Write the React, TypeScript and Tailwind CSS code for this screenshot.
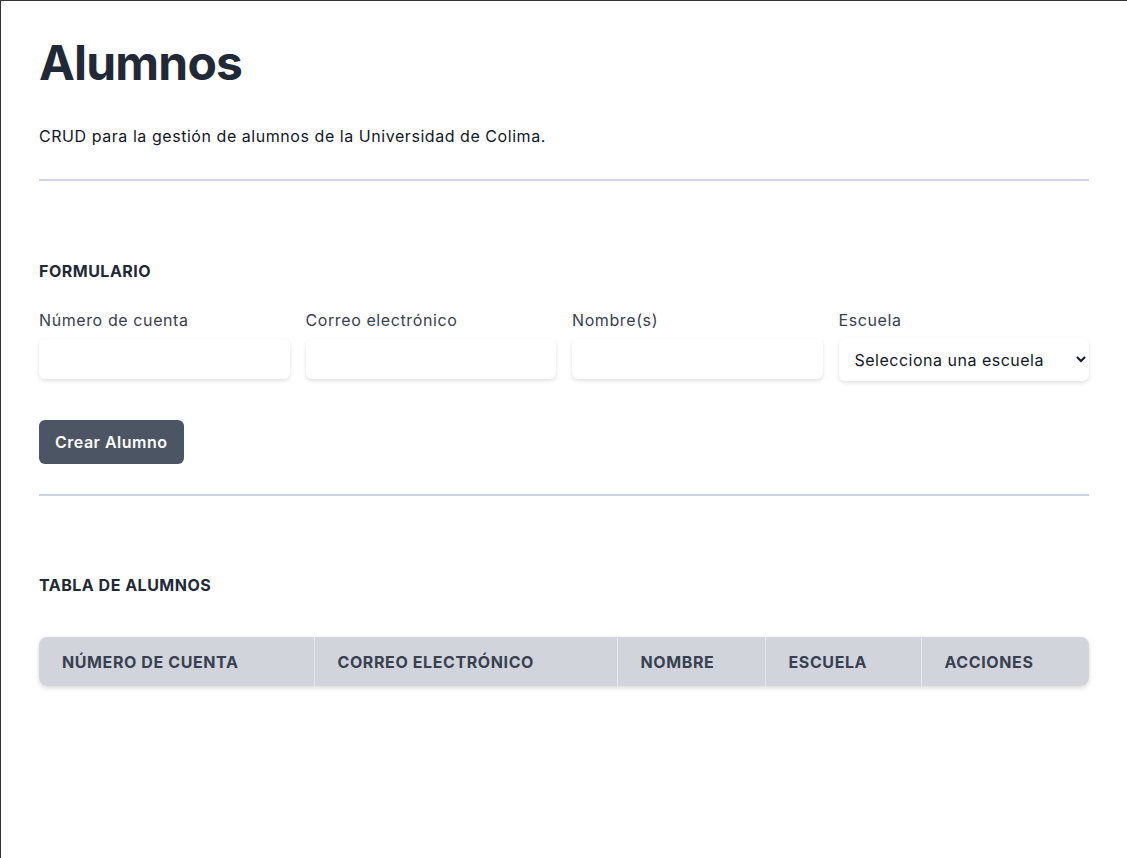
const columns = [
  { label: 'Número de cuenta', w: 'w-[275px]' },
  { label: 'Correo electrónico', w: 'w-[303px]' },
  { label: 'Nombre', w: 'w-[148px]' },
  { label: 'Escuela', w: 'w-[156px]' },
  { label: 'Acciones', w: 'w-[168px]' },
];

function Field({ label }: { label: string }) {
  return (
    <div className="flex flex-col">
      <label className="text-base text-[#374151] leading-6 tracking-[0.6px] mb-[7px]">{label}</label>
      <input
        type="text"
        className="h-10 rounded-md bg-white shadow-[0_2px_4px_rgba(0,0,0,0.12)] px-3 outline-none"
      />
    </div>
  );
}

export default function App() {
  return (
    <div className="min-h-[858px] bg-white border-t border-l border-[#333] font-['Inter',sans-serif]">
      <div className="px-[38px] pt-[32px]">
        {/* Header */}
        <h1 className="text-[48px] leading-[60px] font-bold tracking-[-0.8px] text-[#1f2937]">Alumnos</h1>
        <p className="mt-[31px] text-base leading-6 tracking-[0.55px] text-[#111827]">
          CRUD para la gestión de alumnos de la Universidad de Colima.
        </p>
        <hr className="mt-[31px] border-0 h-[2px] bg-[#cbd5e1]" />

        {/* Formulario */}
        <h2 className="mt-[78px] text-base leading-6 font-bold tracking-[0.5px] text-[#1f2937]">FORMULARIO</h2>
        <div className="mt-[25px] grid grid-cols-4 items-start gap-4">
          <Field label="Número de cuenta" />
          <Field label="Correo electrónico" />
          <Field label="Nombre(s)" />
          <div className="flex flex-col">
            <label className="text-base text-[#374151] leading-6 tracking-[0.6px] mb-[6px]">Escuela</label>
            <select className="h-[43px] rounded-md bg-white shadow-[0_2px_4px_rgba(0,0,0,0.12)] pl-[12px] pr-2 text-base tracking-[0.5px] text-[#111827] outline-none">
              <option>Selecciona una escuela</option>
            </select>
          </div>
        </div>
        <button className="mt-[39px] h-11 px-4 rounded-md bg-[#4b5563] text-white font-semibold text-base tracking-[0.5px]">
          Crear Alumno
        </button>
        <hr className="mt-[30px] border-0 h-[2px] bg-[#cbd5e1]" />

        {/* Tabla */}
        <h2 className="mt-[77px] text-base leading-6 font-bold tracking-[0.5px] text-[#1f2937]">TABLA DE ALUMNOS</h2>
        <div className="mt-[40px] rounded-lg overflow-hidden shadow-[0_2px_5px_rgba(0,0,0,0.15)]">
          <table className="w-full table-fixed border-collapse">
            <thead className="bg-[#d1d5db]">
              <tr>
                {columns.map((c, i) => (
                  <th
                    key={c.label}
                    className={`${c.w} h-[49px] pl-[23px] pr-4 text-left text-base font-bold uppercase tracking-[0.6px] text-[#374151] ${i > 0 ? 'border-l border-[#e5e7eb]' : ''}`}
                  >
                    {c.label}
                  </th>
                ))}
              </tr>
            </thead>
          </table>
        </div>
      </div>
    </div>
  );
}
